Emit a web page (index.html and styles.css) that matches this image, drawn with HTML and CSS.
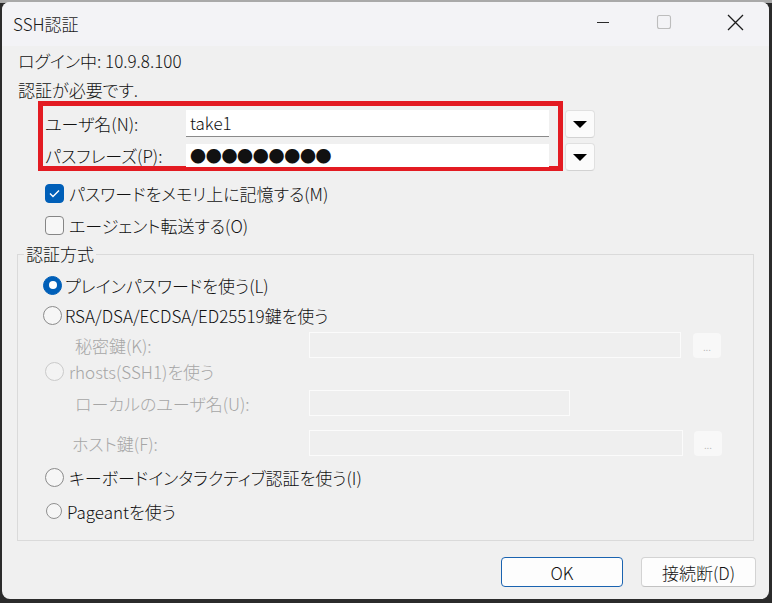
FILE: index.html
```html
<!DOCTYPE html>
<html lang="ja">
<head>
    <meta charset="UTF-8">
    <meta name="viewport" content="width=device-width, initial-scale=1.0">
    <title>SSH認証</title>
    <link rel="stylesheet" href="styles.css">
</head>
<body>

    <div class="window">

        <!-- Barra de título -->
        <div class="titlebar">
            <span class="title">SSH認証</span>
            <div class="caption">
                <span class="cap-btn">
                    <svg width="14" height="14" viewBox="0 0 14 14"><line x1="1" y1="7.5" x2="13" y2="7.5" stroke="#2a2a2a" stroke-width="1.1"/></svg>
                </span>
                <span class="cap-btn">
                    <svg width="16" height="16" viewBox="0 0 16 16"><rect x="1.5" y="1.5" width="13" height="13" rx="2" fill="none" stroke="#bdbdbd" stroke-width="1.1"/></svg>
                </span>
                <span class="cap-btn">
                    <svg width="17" height="17" viewBox="0 0 17 17"><path d="M1 1 L16 16 M16 1 L1 16" stroke="#1c1c1c" stroke-width="1.3" fill="none"/></svg>
                </span>
            </div>
        </div>

        <div class="content">
            <div class="info first">ログイン中: 10.9.8.100</div>
            <div class="info second">認証が必要です.</div>

            <!-- Usuario y contraseña -->
            <div class="cred">
                <div class="highlight">
                    <div class="cred-row user-row">
                        <span class="cred-label">ユーザ名(N):</span>
                        <div class="field user">take1</div>
                    </div>
                    <div class="cred-row pass-row">
                        <span class="cred-label">パスフレーズ(P):</span>
                        <div class="field pass">●●●●●●●●●</div>
                    </div>
                </div>
                <div class="drops">
                    <span class="drop"><i class="tri"></i></span>
                    <span class="drop"><i class="tri"></i></span>
                </div>
            </div>

            <div class="check-row first">
                <span class="checkbox checked">
                    <svg width="19" height="19" viewBox="0 0 19 19"><polyline points="5,9.5 8,12.5 14,6.5" fill="none" stroke="#fff" stroke-width="1.4"/></svg>
                </span>
                パスワードをメモリ上に記憶する(M)
            </div>
            <div class="check-row second">
                <span class="checkbox"></span>
                エージェント転送する(O)
            </div>

            <!-- Método de autenticación -->
            <fieldset class="method">
                <legend>認証方式</legend>

                <div class="opt r1"><span class="radio on"></span>プレインパスワードを使う(L)</div>
                <div class="opt r2"><span class="radio"></span>RSA/DSA/ECDSA/ED25519鍵を使う</div>
                <div class="sub r3">
                    <span class="sub-label">秘密鍵(K):</span>
                    <div class="field off w-key"></div>
                    <span class="dots">...</span>
                </div>
                <div class="opt r4 disabled"><span class="radio off"></span>rhosts(SSH1)を使う</div>
                <div class="sub r5">
                    <span class="sub-label">ローカルのユーザ名(U):</span>
                    <div class="field off w-local"></div>
                </div>
                <div class="sub r6">
                    <span class="sub-label host">ホスト鍵(F):</span>
                    <div class="field off w-host"></div>
                    <span class="dots">...</span>
                </div>
                <div class="opt r7"><span class="radio"></span>キーボードインタラクティブ認証を使う(I)</div>
                <div class="opt r8"><span class="radio small"></span>Pageantを使う</div>
            </fieldset>

            <div class="actions">
                <button class="btn default">OK</button>
                <button class="btn">接続断(D)</button>
            </div>
        </div>
    </div>

</body>
</html>
```

FILE: styles.css
```css
/* General */
body {
    margin: 0;
    padding: 0;
    background: linear-gradient(#a9a9a9 0 3px, #2b2b2b 3px);
    font-family: "Noto Sans CJK JP", "Noto Sans", sans-serif;
    font-size: 17px;
    font-weight: 300;
    font-feature-settings: "palt";
    color: #111;
}

.window {
    width: 767px;
    height: 597px;
    margin: 2px 3px 4px 2px;
    background-color: #f0f0f0;
    border-radius: 8px;
    overflow: hidden;
}

/* Title bar */
.titlebar {
    height: 44px;
    display: flex;
    align-items: center;
    background-color: #f3f3f6;
}

.title {
    margin-left: 11px;
    margin-top: -2px;
    color: #1b1b1b;
}

.caption {
    margin-left: auto;
    display: flex;
    height: 100%;
}

.cap-btn {
    width: 68px;
    display: flex;
    align-items: center;
    justify-content: center;
    margin-top: -4px;
}

.cap-btn:first-child {
    padding-left: 8px;
    width: 60px;
}

.cap-btn:nth-child(2) {
    padding-right: 6px;
    width: 62px;
}

/* Content */
.content {
    padding: 0 15px;
}

.info {
    height: 22px;
    line-height: 22px;
    padding-left: 1px;
}

.info.first {
    margin-top: 4px;
}

.info.second {
    margin-top: 7px;
}

.cred {
    display: flex;
}

.highlight {
    margin-left: 21px;
    width: 525px;
    height: 70px;
    box-sizing: border-box;
    border: 5px solid #e31b22;
    padding: 4px 9px 0 2px;
}

.cred-row {
    display: flex;
    align-items: center;
}

.cred-label {
    width: 141px;
}

.field {
    background-color: #fff;
    box-sizing: border-box;
}

.field.user {
    width: 363px;
    height: 27px;
    line-height: 26px;
    border-bottom: 1px solid #8a8a8a;
    padding-left: 4px;
}

.pass-row {
    margin-top: 6px;
}

.field.pass {
    width: 363px;
    height: 23px;
    line-height: 23px;
    padding-left: 4px;
    font-size: 16px;
    letter-spacing: -0.3px;
}

.drops {
    margin-left: 2px;
    padding-top: 9px;
    display: flex;
    flex-direction: column;
    gap: 5px;
}

.drop {
    width: 30px;
    height: 28px;
    box-sizing: border-box;
    background-color: #fbfbfb;
    border: 1px solid #e0e0e0;
    border-bottom-color: #d2d2d2;
    border-radius: 4px;
    display: flex;
    align-items: center;
    justify-content: center;
}

.tri {
    width: 0;
    height: 0;
    border-left: 7px solid transparent;
    border-right: 7px solid transparent;
    border-top: 7px solid #000;
    margin-top: 1px;
}

/* Checkboxes */
.check-row {
    height: 22px;
    display: flex;
    align-items: center;
    padding-left: 28px;
}

.check-row.first {
    margin-top: 11px;
}

.check-row.second {
    margin-top: 10px;
}

.checkbox {
    width: 19px;
    height: 19px;
    box-sizing: border-box;
    border: 1px solid #868686;
    border-radius: 4px;
    background-color: #f7f7f7;
    margin-right: 5px;
    display: flex;
}

.checkbox.checked {
    background-color: #005fb8;
    border-color: #005fb8;
}

.checkbox svg {
    margin: -1px;
}

/* Group */
.method {
    margin: 9px 0 0 0;
    padding: 9px 0 16px 0;
    border: 1px solid #dadada;
}

.method legend {
    margin-left: 6px;
    padding: 0 2px;
    line-height: 18px;
}

.opt, .sub {
    height: 26px;
    display: flex;
    align-items: center;
    padding-left: 25px;
}

.r2, .r3 { margin-top: 4px; }
.r5 { margin-top: 6px; }
.r6 { margin-top: 14px; }
.r7, .r8 { margin-top: 8px; }

.radio {
    width: 19px;
    height: 19px;
    box-sizing: border-box;
    border: 1px solid #8b8b8b;
    border-radius: 50%;
    background-color: #f6f6f6;
    margin-right: 3px;
    display: flex;
    align-items: center;
    justify-content: center;
}

.radio.on {
    background-color: #005fb8;
    border-color: #005fb8;
}

.radio.on::after {
    content: "";
    width: 8px;
    height: 8px;
    border-radius: 50%;
    background-color: #fff;
}

.radio.off {
    border-color: #cacaca;
    background-color: #f3f3f3;
    margin-left: 2px;
    margin-right: 5px;
}

.radio.small {
    width: 16px;
    height: 16px;
    margin-left: 3px;
    margin-right: 5px;
    border-color: #909090;
}

.r7 .radio {
    margin-left: 2px;
    margin-right: 5px;
}

.disabled {
    color: #a6a6a6;
}

.sub {
    padding-left: 57px;
    color: #a6a6a6;
}

.sub-label {
    width: 234px;
}

.sub-label.host {
    margin-left: -3px;
    width: 237px;
}

.field.off {
    height: 26px;
    background-color: #efefef;
    border: 1px solid #fbfbfb;
}

.w-key { width: 372px; }
.w-local { width: 261px; }
.w-host { width: 374px; }

.dots {
    width: 28px;
    height: 25px;
    margin-left: 12px;
    box-sizing: border-box;
    border-radius: 4px;
    background-color: #f8f8f8;
    color: #b8b8b8;
    font-size: 11px;
    display: flex;
    align-items: flex-end;
    justify-content: center;
    padding-bottom: 4px;
}

.w-host + .dots {
    margin-left: 11px;
}

/* Buttons */
.actions {
    display: flex;
    justify-content: flex-end;
    gap: 18px;
    margin-top: 16px;
    margin-right: -2px;
}

.btn {
    height: 30px;
    width: 115px;
    font-family: inherit;
    font-size: 17px;
    font-weight: 300;
    font-feature-settings: "palt";
    color: #111;
    background-color: #fdfdfd;
    border: 1px solid #d3d3d3;
    border-bottom-color: #c2c2c2;
    border-radius: 4px;
    padding: 0;
}

.btn.default {
    width: 122px;
    border: 1px solid #1a63b0;
}
```
